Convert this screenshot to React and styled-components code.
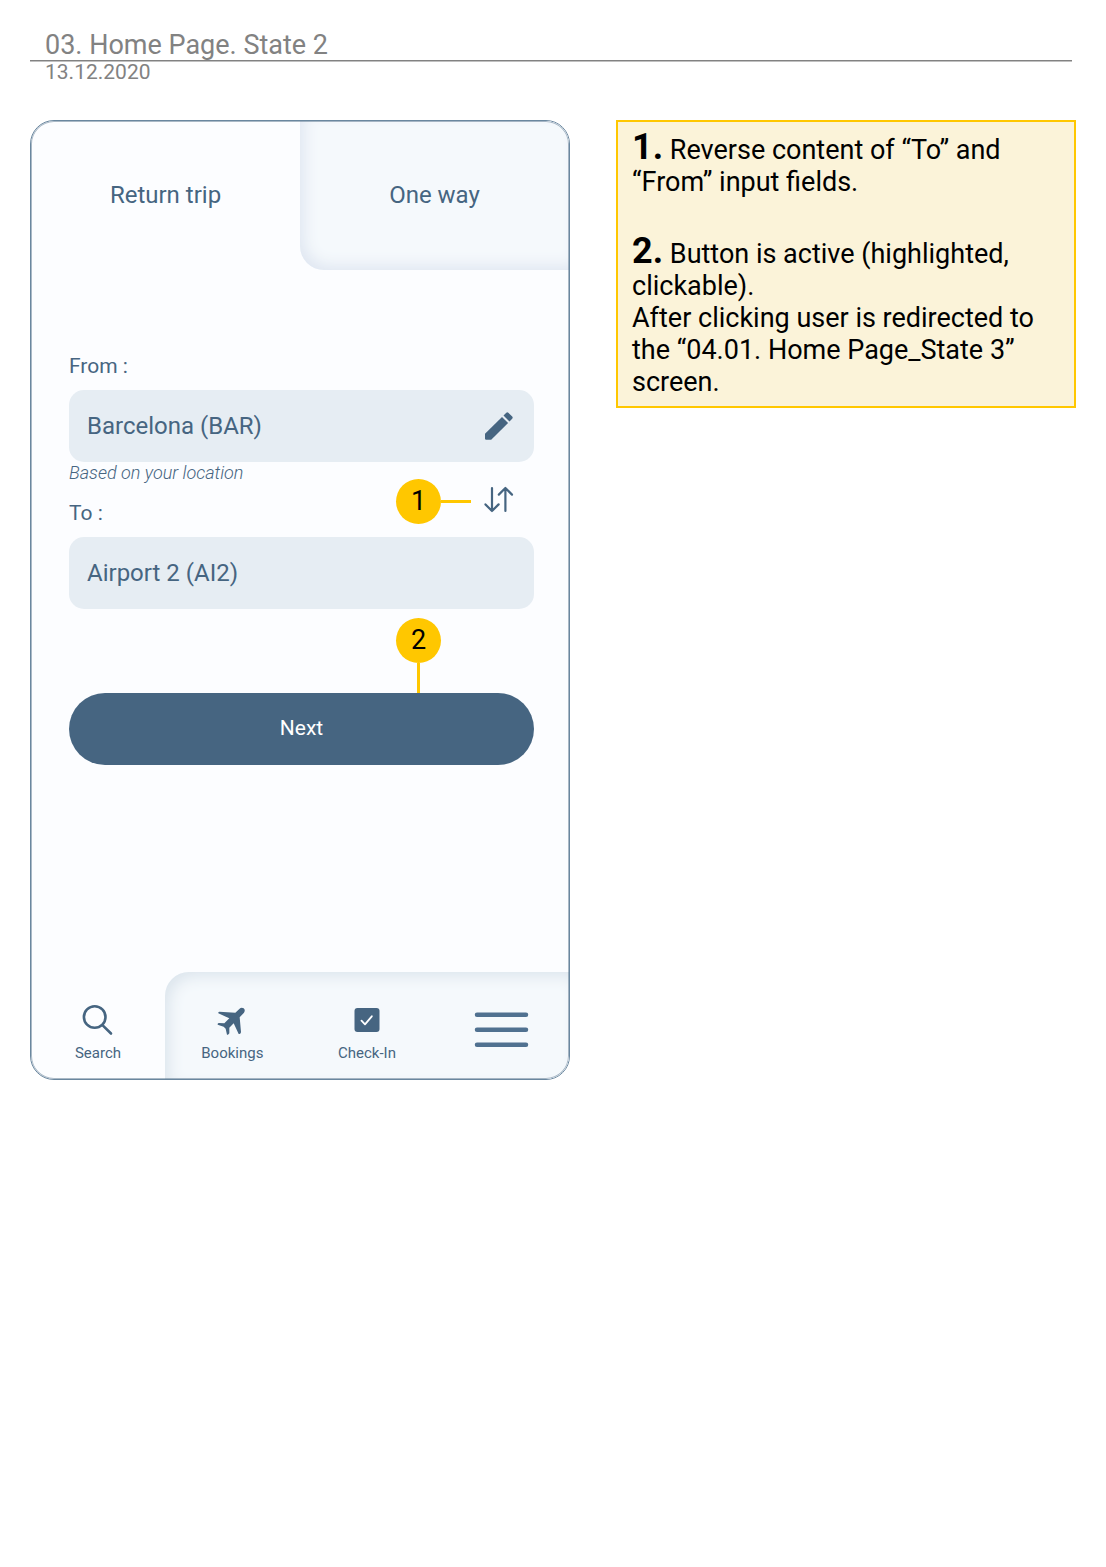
import React, { useState } from "react";
import styled, { createGlobalStyle } from "styled-components";

const ink = "#466581";
const accent = "#ffc700";

const GlobalStyle = createGlobalStyle`
  *, *::before, *::after { box-sizing: border-box; }
  body {
    margin: 0;
    background: #fff;
    font-family: Roboto, "Liberation Sans", sans-serif;
  }
  button, input { font: inherit; color: inherit; }
  button { border: 0; padding: 0; background: none; cursor: pointer; }
  a { color: inherit; text-decoration: none; }
`;

const Page = styled.div`
  max-width: 1106px;
  padding: 30px;
`;

const Header = styled.header`
  margin: 0 4px 37px 0;
  color: #828282;
`;

const Title = styled.h1`
  margin: 0;
  padding-left: 15px;
  border-bottom: 1px solid #828282;
  box-shadow: 0 1px #c0c0c0;
  font-size: 27px;
  font-weight: 400;
  line-height: 30px;
`;

const DateLine = styled.p`
  margin: 0;
  padding-left: 15px;
  font-size: 21px;
  line-height: 22px;
`;

const Board = styled.main`
  display: grid;
  grid-template-columns: minmax(0, 540fr) minmax(0, 460fr);
  align-items: start;
  gap: 46px;
`;

const Phone = styled.section`
  position: relative;
  display: flex;
  flex-direction: column;
  aspect-ratio: 9 / 16;
  overflow: hidden;
  border: 1px solid #6a879f;
  border-radius: 24px;
  background: #fcfdff;
  color: ${ink};

  &::after {
    content: "";
    position: absolute;
    inset: 0;
    border-radius: 23px;
    box-shadow: inset 0 0 0 1px rgba(70, 101, 129, 0.45);
    pointer-events: none;
  }
`;

const Tabs = styled.div`
  display: grid;
  grid-template-columns: 1fr 1fr;
`;

const Tab = styled.button`
  height: 149px;
  padding-bottom: 2px;
  font-size: 24px;
  line-height: 28px;
  ${({ $recessed }) =>
    $recessed &&
    `
    border-bottom-left-radius: 24px;
    background: #f5f9fc;
    box-shadow: inset 6px -6px 15px -2px #dfe6f1;
  `}
`;

const Form = styled.form`
  display: flex;
  flex-direction: column;
  padding: 84px 35px 0 38px;
`;

const Label = styled.label`
  font-size: 21px;
  line-height: 24px;
`;

const Field = styled.div`
  display: flex;
  align-items: center;
  height: 72px;
  margin-top: ${({ $spaced }) => ($spaced ? "12px" : "0")};
  padding: 0 21px 0 18px;
  border-radius: 15px;
  background: #e6edf3;
`;

const TextInput = styled.input`
  flex: 1;
  min-width: 0;
  padding: 0;
  border: 0;
  outline: 0;
  background: none;
  font-size: 24px;
  line-height: 28px;
`;

const IconButton = styled.button`
  display: flex;
`;

const Between = styled.div`
  position: relative;
  display: flex;
  align-items: center;
  justify-content: space-between;
  height: 75px;
  padding-right: 20px;
`;

const BetweenText = styled.div`
  display: flex;
  flex-direction: column;
  align-self: stretch;
  justify-content: space-between;
  padding-bottom: 12px;
`;

const Hint = styled.span`
  font-size: 18px;
  font-style: italic;
  font-weight: 300;
  line-height: 21px;
`;

const Submit = styled.div`
  position: relative;
  display: flex;
  margin-top: 84px;
`;

const NextButton = styled.button`
  flex: 1;
  height: 72px;
  padding-bottom: 3px;
  border-radius: 36px;
  background: ${ink};
  color: #fff;
  font-size: 21px;
  line-height: 24px;
`;

const Marker = styled.span`
  position: absolute;
  display: flex;
  flex-direction: ${({ $down }) => ($down ? "column" : "row")};
  align-items: center;
  ${({ $down }) =>
    $down ? "right: 93px; bottom: 100%;" : "right: 63px; top: 17px;"}

  &::after {
    content: "";
    width: ${({ $down }) => ($down ? "3px" : "30px")};
    height: ${({ $down }) => ($down ? "30px" : "3px")};
    background: ${accent};
  }
`;

const MarkerNumber = styled.span`
  width: 45px;
  height: 45px;
  border-radius: 50%;
  background: ${accent};
  color: #000;
  font-size: 27px;
  line-height: 45px;
  text-align: center;
`;

const BottomNav = styled.nav`
  display: grid;
  grid-template-columns: 134fr 404fr;
  margin-top: auto;
`;

const Recess = styled.div`
  display: grid;
  grid-template-columns: repeat(3, 1fr);
  border-top-left-radius: 24px;
  background: #f5f9fc;
  box-shadow: inset 6px 6px 15px -2px #dbe4ec;
`;

const NavItem = styled.a`
  display: flex;
  flex-direction: column;
  align-items: center;
  gap: 8px;
  height: 107px;
  padding-top: ${({ $bare }) => ($bare ? "40px" : "32px")};
  font-size: 15px;
  line-height: 18px;
`;

const Notes = styled.aside`
  padding: 7px 14px 8px;
  border: 2px solid ${accent};
  background: #fbf3d9;
  color: #000;
  font-size: 27px;
  line-height: 32px;
`;

const Note = styled.p`
  margin: 0;

  & + & {
    margin-top: 35px;
  }
`;

const NoteNumber = styled.strong`
  font-size: 36px;
  font-weight: 700;
  line-height: 36px;
`;

const PencilIcon = () => (
  <svg width="28" height="28" viewBox="0 0 28 28" fill={ink} aria-hidden="true">
    <path d="M0 21.8 17 4.9 23.1 11 6.2 27.7H1.2Q0 27.7 0 26.5Z" />
    <path d="M18.5 3.5 21.3.7Q22.3-.3 23.3.7L27.2 4.5Q28.2 5.6 27.2 6.7L24.5 9.4Z" />
  </svg>
);

const SwapIcon = () => (
  <svg width="30" height="27" viewBox="0 0 30 27" fill="none" stroke={ink} strokeWidth="2.2" strokeLinecap="round" strokeLinejoin="round" aria-hidden="true">
    <path d="M8 2V25M1.5 18.4 8 25l6.6-6.6M21.4 25V2M14.8 8.6 21.4 2l6.6 6.6" />
  </svg>
);

const SearchIcon = () => (
  <svg width="32" height="32" viewBox="0 0 32 32" fill="none" stroke={ink} strokeWidth="2.6" strokeLinecap="round" aria-hidden="true">
    <circle cx="12.7" cy="13" r="10.8" />
    <path d="M20.7 21.3 29 29.5" />
  </svg>
);

const PlaneIcon = () => (
  <svg width="32" height="32" viewBox="0 0 96 96" fill={ink} aria-hidden="true">
    <path d="M70 15Q76 9 83 13 89 18 84 26L71 40 75 84Q75 88 71 90L68 90 53 58 40 71V88L36 92H33L29 74 23 68 5 62V59L8 57 25 58 40 43 7 28V25L10 23 58 26Z" />
  </svg>
);

const CheckIcon = () => (
  <svg width="32" height="32" viewBox="0 0 32 32" fill="none" aria-hidden="true">
    <rect x="3.5" y="4" width="25" height="24" rx="3" fill={ink} />
    <path d="M10.5 16.7 14 20.3 20.8 12.3" stroke="#fff" strokeWidth="1.8" strokeLinecap="round" strokeLinejoin="round" />
  </svg>
);

const MenuIcon = () => (
  <svg width="55" height="36" viewBox="0 0 55 36" fill="none" stroke="#507190" strokeWidth="4.5" strokeLinecap="round" aria-hidden="true">
    <path d="M3 2.7H52M3 17.7H52M3 32.7H52" />
  </svg>
);

export default function App() {
  const [from, setFrom] = useState("Barcelona (BAR)");
  const [to, setTo] = useState("Airport 2 (AI2)");

  const swap = () => {
    setFrom(to);
    setTo(from);
  };

  return (
    <>
      <GlobalStyle />
      <Page>
        <Header>
          <Title>03. Home Page. State 2</Title>
          <DateLine>13.12.2020</DateLine>
        </Header>
        <Board>
          <Phone>
            <Tabs>
              <Tab type="button">Return trip</Tab>
              <Tab type="button" $recessed>One way</Tab>
            </Tabs>
            <Form onSubmit={(e) => e.preventDefault()}>
              <Label htmlFor="from">From :</Label>
              <Field $spaced>
                <TextInput id="from" value={from} onChange={(e) => setFrom(e.target.value)} />
                <IconButton type="button" aria-label="Edit">
                  <PencilIcon />
                </IconButton>
              </Field>
              <Between>
                <BetweenText>
                  <Hint>Based on your location</Hint>
                  <Label htmlFor="to">To :</Label>
                </BetweenText>
                <Marker>
                  <MarkerNumber>1</MarkerNumber>
                </Marker>
                <IconButton type="button" aria-label="Swap" onClick={swap}>
                  <SwapIcon />
                </IconButton>
              </Between>
              <Field>
                <TextInput id="to" value={to} onChange={(e) => setTo(e.target.value)} />
              </Field>
              <Submit>
                <Marker $down>
                  <MarkerNumber>2</MarkerNumber>
                </Marker>
                <NextButton type="submit">Next</NextButton>
              </Submit>
            </Form>
            <BottomNav>
              <NavItem href="#search">
                <SearchIcon />
                Search
              </NavItem>
              <Recess>
                <NavItem href="#bookings">
                  <PlaneIcon />
                  Bookings
                </NavItem>
                <NavItem href="#check-in">
                  <CheckIcon />
                  Check-In
                </NavItem>
                <NavItem href="#menu" aria-label="Menu" $bare>
                  <MenuIcon />
                </NavItem>
              </Recess>
            </BottomNav>
          </Phone>
          <Notes>
            <Note>
              <NoteNumber>1.</NoteNumber> Reverse content of “To” and “From” input fields.
            </Note>
            <Note>
              <NoteNumber>2.</NoteNumber> Button is active (highlighted, clickable).
              <br />
              After clicking user is redirected to the “04.01. Home Page_State 3” screen.
            </Note>
          </Notes>
        </Board>
      </Page>
    </>
  );
}
